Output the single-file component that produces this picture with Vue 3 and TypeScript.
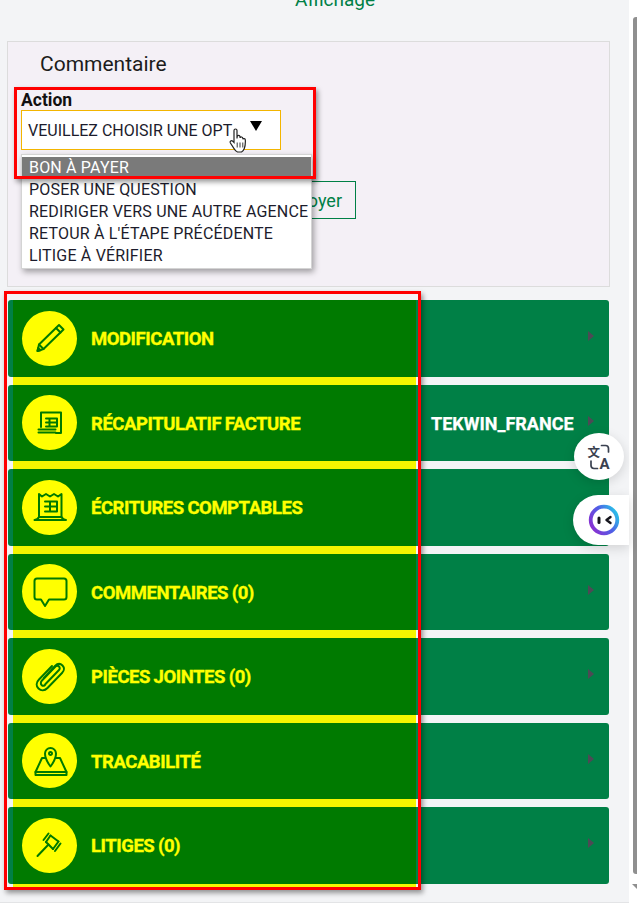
<template>
  <div class="page">
    <main class="content">
      <p class="top-link">Affichage</p>

      <section class="panel">
        <h2 class="panel-title">Commentaire</h2>
        <label class="action-label">Action</label>
        <div class="select-box">
          <span>VEUILLEZ CHOISIR UNE OPT</span>
          <i class="caret"></i>
          <svg class="cursor" viewBox="0 0 18 25" width="18" height="25">
            <path d="M5 2.500c0-2 3-2 3 0v8l.2-2c.3-1.600 2.600-1.500 2.800.1l.1 1.400c.3-1.500 2.500-1.300 2.700.2l.1 1.100c.4-1.200 2.300-1 2.400.5.2 3.200 0 6.200-1 8.700-.6 1.600-1.600 2.800-2.800 3.500H8.500c-1.400-.5-2.400-1.700-3.300-3.100L1.400 15c-.9-1.500 1-3 2.300-1.800L5 14.500z" fill="#fff" stroke="#222" stroke-width="1.200" />
            <path d="M8.200 14.500v5M11 14.500v5M13.800 14.500v5" stroke="#222" stroke-width=".9" />
          </svg>
        </div>
        <button class="send-btn" type="button">Envoyer</button>
        <ul class="dropdown">
          <li v-for="(option, i) in options" :key="option" :class="{ active: i === 0 }">{{ option }}</li>
        </ul>
        <div class="red-box action-box"></div>
      </section>

      <section class="rows">
        <article v-for="row in rows" :key="row.label" class="row">
          <div class="row-main">
            <span class="icon-disc">
              <svg viewBox="0 0 40 40" width="40" height="40" fill="none" stroke="#007a00" stroke-width="2" stroke-linejoin="round" stroke-linecap="round">
                <path v-for="d in row.paths" :key="d" :d="d" />
              </svg>
            </span>
            <span class="row-label">{{ row.label }}</span>
          </div>
          <span class="row-value">{{ row.value }}</span>
          <i class="row-arrow"></i>
        </article>
        <div class="red-box rows-box"></div>
      </section>
    </main>

    <aside class="scrollbar">
      <i class="thumb"></i>
      <i class="arrow-down"></i>
    </aside>

    <button class="float-btn translate" type="button" aria-label="Traduire">
      <svg viewBox="0 0 26 26" width="26" height="26" fill="none" stroke="#3a4150" stroke-width="1.700" stroke-linecap="round" stroke-linejoin="round">
        <text x="1.500" y="12.500" class="glyph-cjk">文</text>
        <text x="13.500" y="24.500" class="glyph-latin">A</text>
        <path d="M15.500 1.500h4c2 0 3 1.200 3 3v3.500" />
        <path d="M11.500 24.500H8c-2 0-3-1.200-3-3v-4.500" />
      </svg>
    </button>
    <button class="float-btn assistant" type="button" aria-label="Assistant">
      <svg viewBox="0 0 32 32" width="32" height="32" fill="none">
        <defs>
          <linearGradient id="ring" x1="0" y1="0.800" x2="1" y2="0.200">
            <stop offset="0" stop-color="#8a2fd0" />
            <stop offset="0.550" stop-color="#4f5fe6" />
            <stop offset="1" stop-color="#28c4e8" />
          </linearGradient>
        </defs>
        <circle cx="16" cy="16" r="13.300" stroke="url(#ring)" stroke-width="3.800" />
        <path d="M11 14v4.500" stroke="#16161e" stroke-width="3" stroke-linecap="round" />
        <path d="M22.500 13 18.500 16l4 3" stroke="#16161e" stroke-width="2.400" stroke-linecap="round" stroke-linejoin="round" />
      </svg>
    </button>
  </div>
</template>

<script setup lang="ts">
interface Row {
  label: string
  value?: string
  paths: string[]
}

const options = [
  'BON À PAYER',
  'POSER UNE QUESTION',
  'REDIRIGER VERS UNE AUTRE AGENCE',
  "RETOUR À L'ÉTAPE PRÉCÉDENTE",
  'LITIGE À VÉRIFIER',
]

// icons drawn on a 40x40 box, same stroke colour as the row
const rows: Row[] = [
  {
    label: 'MODIFICATION',
    paths: [
      'M29 7 33.500 11.500 13.500 31 7.500 33 9 26.500z',
      'M26 10 30.500 14.500',
      'M9 26.500 13.500 31',
      'M7.500 33 8.200 30 10.500 32.300z',
    ],
  },
  {
    label: 'RÉCAPITULATIF FACTURE',
    paths: [
      'M11 24V9.500h20v20.500h-5',
      'M8.500 26.500h17M8.500 29.500h17',
      'M16 15.500h11M16 19.500h11M16 23.500h11M19.500 15.500v8M27 15.500v8',
    ],
  },
  {
    label: 'ÉCRITURES COMPTABLES',
    paths: [
      'M9 30V7l3 2.500L16 7l4 2.500L24 7l4 2.500L31.500 7v23',
      'M4.500 33c2 0 3.500-1 4.500-3h22.500c1 2 2.500 3 4.500 3z',
      'M15 14.500h12M15 19.500h12M15 24.500h12M20 14.500v10M27 14.500v10',
    ],
  },
  {
    label: 'COMMENTAIRES (0)',
    paths: [
      'M7 6.500h27c1.500 0 2.500 1 2.500 2.500v16c0 1.500-1 2.500-2.500 2.500H19l-4 6.500-4-6.500H7c-1.500 0-2.500-1-2.500-2.500V9c0-1.500 1-2.500 2.500-2.500z',
    ],
  },
  {
    label: 'PIÈCES JOINTES (0)',
    paths: [
      'M14 22 25 10c2.500-2.500 5.500-2.500 7.500-.5s2 5-.5 7.500L17.500 32c-3 3-6.500 3-9 .5s-2.500-6 .5-9l13-13.500',
      'M15.500 28 29 14c1-1 1-2.500 0-3.500s-2.500-1-3.500 0L12 24.500c-1.500 1.500-1.500 3.500-.2 4.700s3 .5 3.700-1.200',
    ],
  },
  {
    label: 'TRACABILITÉ',
    paths: [
      'M20.500 25.500c-3-4-5.500-7.500-5.500-13a5.500 5.500 0 0 1 11 0c0 5.500-2.500 9-5.500 13z',
      'M20.500 11a1.500 1.500 0 1 0 0 3 1.500 1.500 0 0 0 0-3z',
      'M15 17h-3L5.500 31h31L30 17h-4',
      'M5.500 31v3h31v-3',
    ],
  },
  {
    label: 'LITIGES (0)',
    paths: [
      'M18.500 8.500 13.500 15M20.500 10.500 16 17',
      'M30.500 18.500 25 26M28.500 16.500 23 24',
      'M20.500 10.500 28.500 16.500M16 17 23 24',
      'M18.500 19.500 7.500 31',
    ],
  },
]

rows[1].value = 'TEKWIN_FRANCE'
</script>

<style>
html,
body {
  margin: 0;
  background: #f3f4f6;
  overflow: hidden;
}
</style>

<style scoped>
.page {
  position: relative;
  width: 637px;
  height: 904px;
  overflow: hidden;
  font-family: Roboto, "Liberation Sans", sans-serif;
  color: #1c1c1c;
  background: #fff;
}

.content {
  width: 629px;
  height: 903px;
  padding: 0 20px 0 7px;
  box-sizing: border-box;
  background: #f3f4f6;
  border-bottom: 1px solid #e3e4e6;
}

.top-link {
  margin: 0;
  height: 41px;
  padding-left: 288px;
  font-size: 19px;
  line-height: 0;
  color: #008046;
}

.panel {
  position: relative;
  height: 246px;
  margin-right: -1px;
  padding: 10px 13px;
  box-sizing: border-box;
  background: #f4f0f6;
  border: 1px solid #dcdcdc;
}

.panel-title {
  margin: 0 0 0 19px;
  font-size: 21px;
  font-weight: 400;
  line-height: 24px;
}

.action-label {
  display: block;
  margin-top: 14px;
  font-size: 17.500px;
  font-weight: 700;
  line-height: 20px;
  color: #111;
}

.select-box {
  position: relative;
  width: 260px;
  height: 40px;
  padding-left: 6px;
  box-sizing: border-box;
  background: #fff;
  border: 1px solid #f3b500;
  font-size: 16px;
  line-height: 40px;
  color: #1c1c2c;
  white-space: nowrap;
}

.caret {
  position: absolute;
  left: 228px;
  top: 10px;
  border-left: 6px solid transparent;
  border-right: 6px solid transparent;
  border-top: 10px solid #000;
}

.cursor {
  position: absolute;
  left: 207px;
  top: 17px;
  z-index: 3;
}

.send-btn {
  display: block;
  width: 130px;
  height: 38px;
  margin: 31px 0 0 205px;
  padding: 0 13px 0 0;
  text-align: right;
  background: transparent;
  border: 1px solid #008046;
  font-family: inherit;
  font-size: 18px;
  color: #008046;
}

.dropdown {
  position: absolute;
  left: 13px;
  top: 112px;
  width: 289px;
  margin: 0;
  padding: 2px 0 1px;
  list-style: none;
  background: #fff;
  border: 1px solid #d4d4d4;
  box-shadow: 2px 3px 6px rgba(0, 0, 0, 0.35);
  font-size: 16px;
  line-height: 22px;
  letter-spacing: 0.18px;
  color: #1c1c2c;
}

.dropdown li {
  padding-left: 7px;
  white-space: nowrap;
}

.dropdown li.active {
  background: #7a7a7a;
  color: #fff;
}

.red-box {
  position: absolute;
  border: 3px solid #f00;
  box-shadow: 2px 3px 5px rgba(0, 0, 0, 0.4);
  pointer-events: none;
  z-index: 4;
}

.action-box {
  left: 6px;
  top: 45px;
  width: 296px;
  height: 86px;
}

.rows {
  position: relative;
  display: flex;
  flex-direction: column;
  gap: 8px;
  margin-top: 13px;
  margin-left: 1px;
}

.row {
  position: relative;
  display: flex;
  align-items: center;
  height: 76.500px;
  background: #008046;
  border-radius: 3px;
}

.row-main {
  display: flex;
  align-items: center;
  align-self: stretch;
  gap: 14px;
  width: 403px;
  margin-left: 5px;
  padding-left: 9px;
  box-sizing: border-box;
  background: #007a00;
  box-shadow: 0 8px 0 #f5f500;
}

.row:last-of-type .row-main {
  box-shadow: 0 3px 0 #f5f500;
}

.icon-disc {
  display: flex;
  align-items: center;
  justify-content: center;
  flex: none;
  width: 55px;
  height: 55px;
  border-radius: 50%;
  background: #ff0;
}

.row-label {
  position: relative;
  top: 1px;
  font-size: 18.500px;
  font-weight: 700;
  letter-spacing: -0.45px;
  word-spacing: -0.5px;
  -webkit-text-stroke: 0.35px #ff0;
  color: #ff0;
}

.row-value {
  margin-left: 15px;
  position: relative;
  top: 1px;
  font-size: 18px;
  font-weight: 700;
  -webkit-text-stroke: 0.25px #fff;
  color: #fff;
}

.row-arrow {
  position: absolute;
  right: 15px;
  top: 31px;
  border-top: 5px solid transparent;
  border-bottom: 5px solid transparent;
  border-left: 6px solid #4d4a55;
}

.rows-box {
  left: -4px;
  top: -9px;
  width: 411px;
  height: 593px;
}

.scrollbar {
  position: absolute;
  top: 0;
  right: 0;
  width: 8px;
  height: 904px;
  background: #fff;
}

.thumb {
  position: absolute;
  left: 4px;
  right: 0;
  top: 17px;
  height: 857px;
  background: #8f8f8f;
  border-radius: 3px 0 0 3px;
}

.arrow-down {
  position: absolute;
  left: 3px;
  top: 884px;
  border-left: 5px solid transparent;
  border-right: 5px solid transparent;
  border-top: 5px solid #8f8f8f;
}

.float-btn {
  position: absolute;
  display: flex;
  align-items: center;
  justify-content: center;
  padding: 0;
  border: 0;
  background: #fff;
  box-shadow: 0 3px 12px rgba(0, 0, 0, 0.14);
}

.float-btn svg {
  overflow: visible;
}

.translate {
  left: 574px;
  top: 433px;
  width: 50px;
  height: 47px;
  border-radius: 50%;
}

.assistant {
  left: 573px;
  top: 495px;
  width: 56px;
  height: 50px;
  padding-left: 5px;
  border-radius: 25px 0 0 25px;
}

.glyph-cjk {
  font-family: "Noto Sans CJK SC", sans-serif;
  font-size: 12.500px;
  font-weight: 700;
  fill: #3a4150;
  stroke: none;
}

.glyph-latin {
  font-family: Roboto, sans-serif;
  font-size: 15px;
  font-weight: 700;
  fill: #3a4150;
  stroke: none;
}
</style>
